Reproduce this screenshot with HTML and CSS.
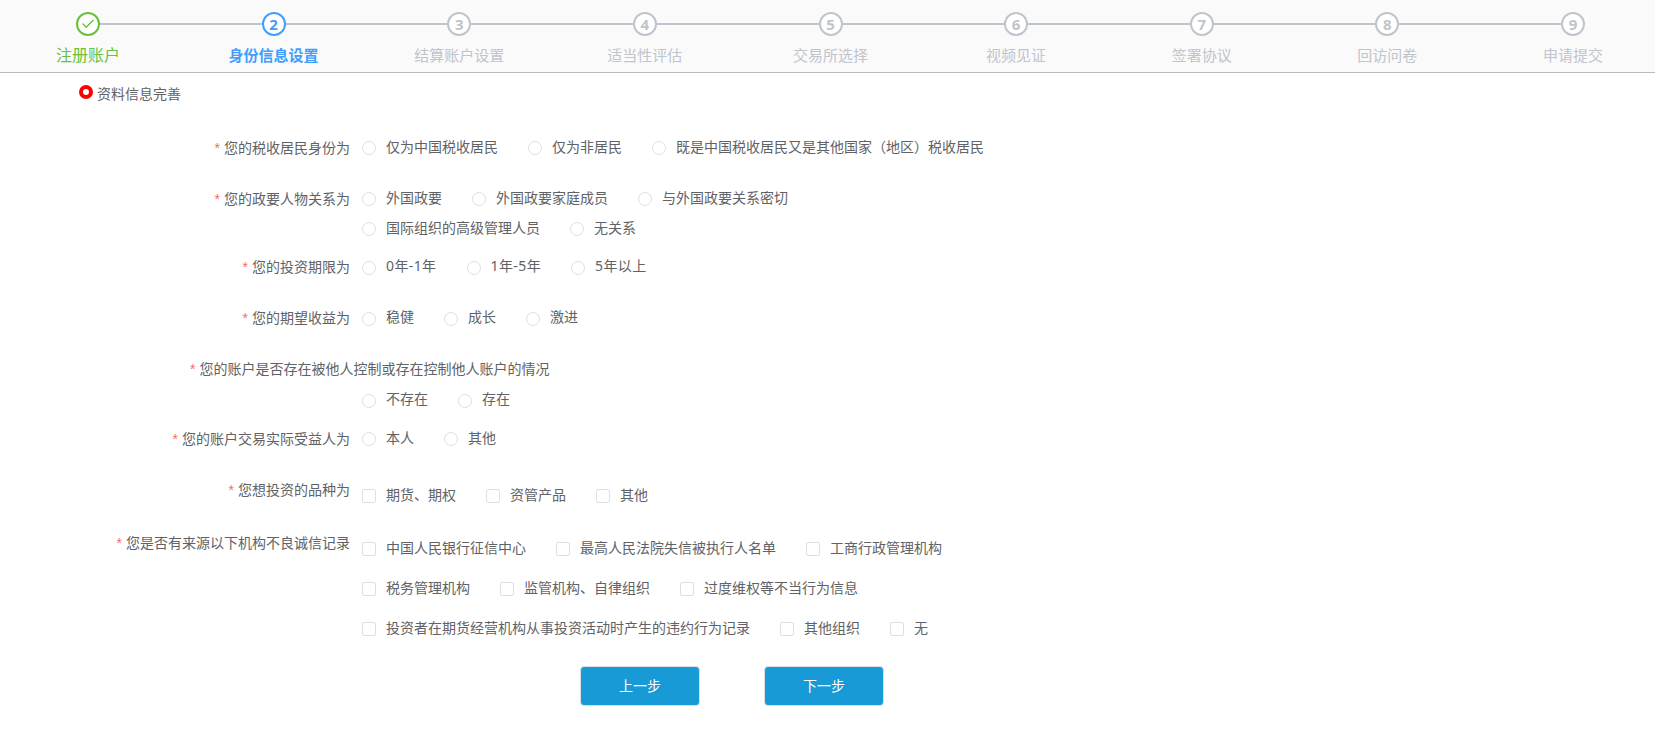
FILE: index.html
```html
<!DOCTYPE html>
<html lang="zh-CN">

<head>
  <meta charset="UTF-8" />
  <meta name="viewport" content="width=device-width, initial-scale=1.0" />
  <title>身份信息设置</title>
  <link rel="stylesheet" href="styles.css">
</head>

<body>
  <header class="steps">
    <div class="step success">
      <div class="circle">
        <svg width="14" height="14" viewBox="0 0 14 14"><path d="M1.6 6.6 L5.2 10.2 L12.4 3.1" /></svg>
      </div>
      <div class="title">注册账户</div>
    </div>
    <div class="step process"><div class="circle">2</div><div class="title">身份信息设置</div></div>
    <div class="step"><div class="circle">3</div><div class="title">结算账户设置</div></div>
    <div class="step"><div class="circle">4</div><div class="title">适当性评估</div></div>
    <div class="step"><div class="circle">5</div><div class="title">交易所选择</div></div>
    <div class="step"><div class="circle">6</div><div class="title">视频见证</div></div>
    <div class="step"><div class="circle">7</div><div class="title">签署协议</div></div>
    <div class="step"><div class="circle">8</div><div class="title">回访问卷</div></div>
    <div class="step"><div class="circle">9</div><div class="title">申请提交</div></div>
  </header>

  <main>
    <div class="section-title"><i class="dot"></i><span>资料信息完善</span></div>

    <form>
      <div class="item">
        <div class="label">您的税收居民身份为</div>
        <div class="content">
          <div class="line">
            <label class="option"><input type="radio" name="tax" /><span>仅为中国税收居民</span></label>
            <label class="option"><input type="radio" name="tax" /><span>仅为非居民</span></label>
            <label class="option"><input type="radio" name="tax" /><span>既是中国税收居民又是其他国家（地区）税收居民</span></label>
          </div>
        </div>
      </div>

      <div class="item tight">
        <div class="label">您的政要人物关系为</div>
        <div class="content">
          <div class="line">
            <label class="option"><input type="radio" name="politics" /><span>外国政要</span></label>
            <label class="option"><input type="radio" name="politics" /><span>外国政要家庭成员</span></label>
            <label class="option"><input type="radio" name="politics" /><span>与外国政要关系密切</span></label>
          </div>
          <div class="line">
            <label class="option"><input type="radio" name="politics" /><span>国际组织的高级管理人员</span></label>
            <label class="option"><input type="radio" name="politics" /><span>无关系</span></label>
          </div>
        </div>
      </div>

      <div class="item raised">
        <div class="label">您的投资期限为</div>
        <div class="content">
          <div class="line years">
            <label class="option"><input type="radio" name="term" /><span>0年-1年</span></label>
            <label class="option"><input type="radio" name="term" /><span>1年-5年</span></label>
            <label class="option"><input type="radio" name="term" /><span>5年以上</span></label>
          </div>
        </div>
      </div>

      <div class="item raised">
        <div class="label">您的期望收益为</div>
        <div class="content">
          <div class="line">
            <label class="option"><input type="radio" name="profit" /><span>稳健</span></label>
            <label class="option"><input type="radio" name="profit" /><span>成长</span></label>
            <label class="option"><input type="radio" name="profit" /><span>激进</span></label>
          </div>
        </div>
      </div>

      <div class="item raised long">
        <div class="label">您的账户是否存在被他人控制或存在控制他人账户的情况</div>
        <div class="content">
          <div class="line">
            <label class="option"><input type="radio" name="control" /><span>不存在</span></label>
            <label class="option"><input type="radio" name="control" /><span>存在</span></label>
          </div>
        </div>
      </div>

      <div class="item">
        <div class="label">您的账户交易实际受益人为</div>
        <div class="content">
          <div class="line">
            <label class="option"><input type="radio" name="owner" /><span>本人</span></label>
            <label class="option"><input type="radio" name="owner" /><span>其他</span></label>
          </div>
        </div>
      </div>

      <div class="item checks">
        <div class="label">您想投资的品种为</div>
        <div class="content">
          <div class="line">
            <label class="option"><input type="checkbox" /><span>期货、期权</span></label>
            <label class="option"><input type="checkbox" /><span>资管产品</span></label>
            <label class="option"><input type="checkbox" /><span>其他</span></label>
          </div>
        </div>
      </div>

      <div class="item checks">
        <div class="label">您是否有来源以下机构不良诚信记录</div>
        <div class="content">
          <div class="line">
            <label class="option"><input type="checkbox" /><span>中国人民银行征信中心</span></label>
            <label class="option"><input type="checkbox" /><span>最高人民法院失信被执行人名单</span></label>
            <label class="option"><input type="checkbox" /><span>工商行政管理机构</span></label>
          </div>
          <div class="line">
            <label class="option"><input type="checkbox" /><span>税务管理机构</span></label>
            <label class="option"><input type="checkbox" /><span>监管机构、自律组织</span></label>
            <label class="option"><input type="checkbox" /><span>过度维权等不当行为信息</span></label>
          </div>
          <div class="line">
            <label class="option"><input type="checkbox" /><span>投资者在期货经营机构从事投资活动时产生的违约行为记录</span></label>
            <label class="option"><input type="checkbox" /><span>其他组织</span></label>
            <label class="option"><input type="checkbox" /><span>无</span></label>
          </div>
        </div>
      </div>

      <div class="buttons">
        <button type="button">上一步</button>
        <button type="button">下一步</button>
      </div>
    </form>
  </main>
</body>

</html>
```
FILE: styles.css
```css
* {
  box-sizing: border-box;
}

body {
  margin: 0;
  background-color: #fff;
  font-family: "Noto Sans", "Noto Sans CJK SC", sans-serif;
  font-size: 14px;
  color: #606266;
  overflow: hidden;
}

/* steps */

.steps {
  display: flex;
  justify-content: space-between;
  height: 73px;
  padding: 12px 2px 0 8px;
  background-color: #fafafa;
  border-bottom: 1px solid #b4bcc4;
}

.step {
  position: relative;
  width: 160px;
  text-align: center;
  color: #c0c4cc;
}

/* line to the next circle */
.step:not(:last-child)::after {
  content: "";
  position: absolute;
  top: 11px;
  left: 92px;
  width: 162px;
  height: 2px;
  background-color: #c0c4cc;
}

.circle {
  display: flex;
  align-items: center;
  justify-content: center;
  width: 24px;
  height: 24px;
  margin: 0 auto;
  border: 2px solid;
  border-radius: 50%;
  background-color: #fff;
  font-family: "Open Sans", sans-serif;
  font-size: 15px;
  font-weight: bold;
  line-height: 20px;
}

.circle svg {
  fill: none;
  stroke: currentColor;
  stroke-width: 1.4;
}

.title {
  font-size: 15px;
  line-height: 38px;
}

.success {
  color: #67c23a;
}

.success .title {
  font-size: 16px;
}

.process {
  color: #409eff;
}

.process .title {
  font-weight: bold;
}

/* form */

.section-title {
  display: flex;
  gap: 4px;
  height: 60px;
  padding: 6px 0 0 79px;
  line-height: 30px;
}

.dot {
  width: 14px;
  height: 14px;
  margin-top: 6px;
  border: 4px solid #f00;
  border-radius: 50%;
}

.item {
  display: flex;
  margin-bottom: 21px;
}

.label {
  width: 350px;
  margin-right: 12px;
  line-height: 30px;
  text-align: right;
  white-space: nowrap;
}

.label::before {
  content: "*";
  margin-right: 4px;
  font-family: "Liberation Sans", sans-serif;
  color: #f56c6c;
}

.line {
  display: flex;
  gap: 30px;
  height: 30px;
}

.option {
  display: flex;
  align-items: center;
  gap: 10px;
  white-space: nowrap;
}

.option span {
  line-height: 28px;
  padding-bottom: 2px;
}

.option input {
  appearance: none;
  flex: none;
  width: 14px;
  height: 14px;
  margin: 0;
  border: 1px solid #dcdfe6;
  background-color: #fff;
}

.option input[type="radio"] {
  border-radius: 50%;
}

.option input[type="checkbox"] {
  border-radius: 2px;
}

.years span {
  letter-spacing: 0.4px;
}

.tight {
  margin-bottom: 9px;
}

.raised .label {
  line-height: 28px;
  padding-bottom: 2px;
}

.raised .option span {
  line-height: 26px;
  padding-bottom: 4px;
}

.long {
  display: block;
  margin-bottom: 8px;
}

.long .label {
  width: auto;
  padding-left: 190px;
  text-align: left;
}

.long .content {
  padding: 1px 0 0 362px;
}

.checks {
  margin-bottom: 17px;
}

.checks .content {
  display: flex;
  flex-direction: column;
  gap: 10px;
  padding-top: 6px;
}

.buttons {
  display: flex;
  gap: 64px;
  padding: 5px 0 0 580px;
}

button {
  width: 120px;
  height: 40px;
  padding: 0 0 2px;
  border: 1px solid #dcdfe6;
  border-radius: 4px;
  background-color: #189ad6;
  font-family: inherit;
  font-size: 14px;
  color: #fff;
}
```
